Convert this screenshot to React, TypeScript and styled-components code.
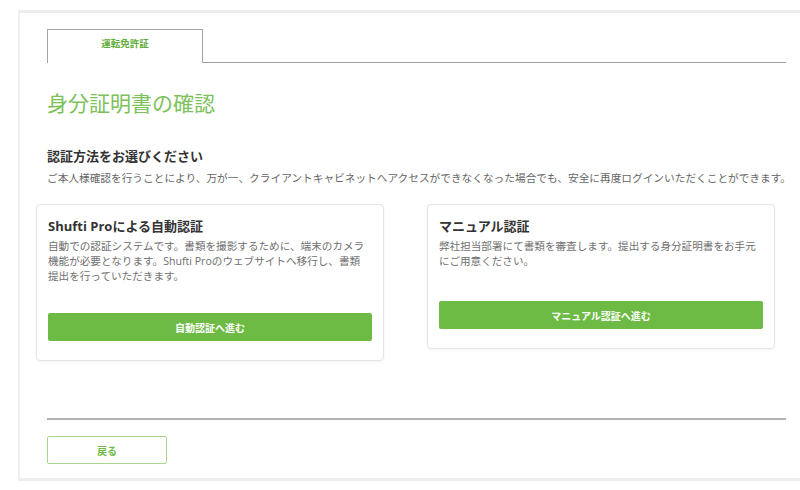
import styled, { createGlobalStyle } from 'styled-components';

const GlobalStyle = createGlobalStyle`
  html, body {
    margin: 0;
    padding: 0;
    background: #ffffff;
    overflow: hidden;
  }
  body {
    font-family: 'Open Sans', 'Noto Sans CJK JP', sans-serif;
    color: #333333;
  }
`;

const Panel = styled.div`
  margin: 10px 0 0 18px;
  width: calc(100vw - 18px);
  border-top: 3px solid #ededed;
  border-left: 2px solid #efefef;
  border-bottom: 3px solid #ededed;
  padding: 16px 0 14px 27px;
  box-sizing: border-box;
`;

const Content = styled.div`
  width: 739px;
`;

const TabBar = styled.div`
  display: flex;
  align-items: flex-end;
`;

const Tab = styled.div`
  width: 154px;
  height: 33px;
  border: 1px solid #a3a3a3;
  border-bottom: none;
  text-align: center;
  font-size: 9.5px;
  font-weight: 700;
  color: #5fae3a;
  line-height: 28px;
`;

const TabLine = styled.div`
  flex: 1;
  border-bottom: 1px solid #9c9c9c;
`;

const Title = styled.h1`
  margin: 25px 0 0;
  font-size: 21px;
  line-height: 30px;
  font-weight: 400;
  color: #7cc15a;
`;

const Subtitle = styled.h2`
  margin: 29px 0 0;
  font-size: 13px;
  line-height: 18px;
  font-weight: 700;
  color: #333333;
`;

const Lead = styled.p`
  margin: 5px 0 0;
  font-size: 10.68px;
  line-height: 16px;
  color: #666666;
  white-space: nowrap;
`;

const Cards = styled.div`
  margin: 18px 0 0 -11px;
  display: grid;
  grid-template-columns: 348px 348px;
  column-gap: 43px;
  align-items: start;
`;

const Card = styled.div`
  border: 1px solid #e6e6e6;
  border-radius: 4px;
  box-shadow: 0 1px 3px rgba(0, 0, 0, 0.05);
  padding: 12px 11px 19px;
  background: #ffffff;
`;

const CardTitle = styled.h3`
  margin: 0;
  font-size: 13px;
  line-height: 18px;
  font-weight: 700;
  color: #333333;
`;

const CardText = styled.p`
  margin: 4px 0 0;
  font-size: 10.6px;
  line-height: 15px;
  color: #6f6f6f;
`;

const PrimaryButton = styled.button<{ $gap: number }>`
  display: block;
  width: 100%;
  height: 28px;
  margin-top: ${(p) => p.$gap}px;
  border: none;
  border-radius: 2px;
  background: #6dbb45;
  color: #ffffff;
  font-family: inherit;
  font-size: 10px;
  font-weight: 700;
  cursor: pointer;
`;

const Divider = styled.hr`
  margin: 57px 0 0;
  border: none;
  border-top: 2px solid #b3b3b3;
  box-shadow: 0 0 8px rgba(0, 0, 0, 0.06);
`;

const BackButton = styled.button`
  display: block;
  margin-top: 16px;
  width: 120px;
  height: 28px;
  border: 1px solid #a9d48f;
  border-radius: 2px;
  background: #ffffff;
  color: #6dbb45;
  font-family: inherit;
  font-size: 10px;
  font-weight: 700;
  cursor: pointer;
`;

export default function App() {
  return (
    <>
      <GlobalStyle />
      <Panel>
        <Content>
          <TabBar>
            <Tab>運転免許証</Tab>
            <TabLine />
          </TabBar>
          <Title>身分証明書の確認</Title>
          <Subtitle>認証方法をお選びください</Subtitle>
          <Lead>
            ご本人様確認を行うことにより、万が一、クライアントキャビネットへアクセスができなくなった場合でも、安全に再度ログインいただくことができます。
          </Lead>
          <Cards>
            <Card>
              <CardTitle>Shufti Proによる自動認証</CardTitle>
              <CardText>
                自動での認証システムです。書類を撮影するために、端末のカメラ
                <br />
                機能が必要となります。Shufti Proのウェブサイトへ移行し、書類
                <br />
                提出を行っていただきます。
              </CardText>
              <PrimaryButton $gap={29}>自動認証へ進む</PrimaryButton>
            </Card>
            <Card>
              <CardTitle>マニュアル認証</CardTitle>
              <CardText>
                弊社担当部署にて書類を審査します。提出する身分証明書をお手元
                <br />
                にご用意ください。
              </CardText>
              <PrimaryButton $gap={32}>マニュアル認証へ進む</PrimaryButton>
            </Card>
          </Cards>
          <Divider />
          <BackButton>戻る</BackButton>
        </Content>
      </Panel>
    </>
  );
}
